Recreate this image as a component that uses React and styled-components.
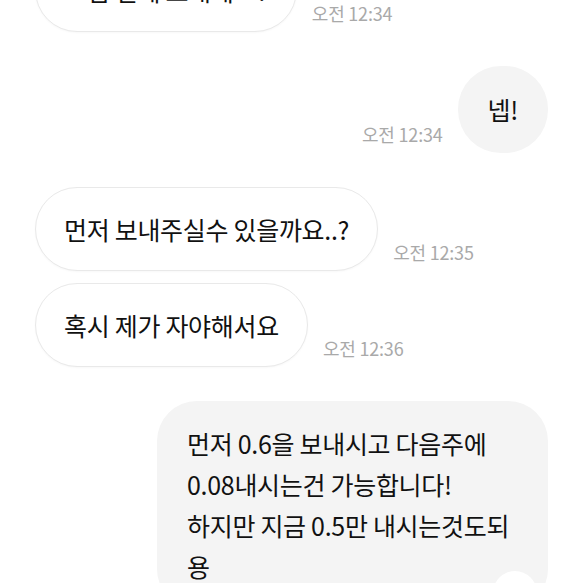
import React from 'react'
import styled, { createGlobalStyle, css } from 'styled-components'

const GlobalStyle = createGlobalStyle`
    html, body {
        margin: 0;
        padding: 0;
        background: #ffffff;
    }
    body {
        font-family: 'Noto Sans CJK KR', 'Noto Sans', sans-serif;
        -webkit-font-smoothing: antialiased;
    }
`

const Screen = styled.div`
    width: 583px;
    height: 583px;
    overflow: hidden;
    background: #ffffff;
`

// scrolled chat: first bubble sits partly above the viewport
const Thread = styled.div`
    display: flex;
    flex-direction: column;
    padding: 0 35px 0 35px;
    margin-top: -52px;
`

const Row = styled.div`
    display: flex;
    align-items: flex-end;
    gap: 15px;
    justify-content: ${(p) => (p.$mine ? 'flex-end' : 'flex-start')};
    margin-top: ${(p) => (p.$grouped ? '12px' : '34px')};
    &:first-child {
        margin-top: 0;
    }
`

const Bubble = styled.div`
    position: relative;
    box-sizing: border-box;
    border-radius: 43px;
    font-size: 25px;
    line-height: 41px;
    color: #111111;
    letter-spacing: -0.3px;
    max-width: 391px;
    white-space: pre-line;
    ${(p) =>
        p.$mine
            ? css`
                  padding: 23px 30px;
                  background: #f4f4f4;
              `
            : css`
                  padding: 20.5px 28px;
                  background: #ffffff;
                  border: 1.5px solid #e9e9e9;
                  box-shadow: 0 1px 2px rgba(0, 0, 0, 0.03);
              `}
    ${(p) =>
        p.$long &&
        css`
            width: 391px;
            padding: 22px 30px;
            border-radius: 40px;
        `}
`

const Time = styled.span`
    flex: none;
    margin-bottom: 8px;
    font-size: 18px;
    line-height: 22px;
    color: #a9a9a9;
    letter-spacing: -0.2px;
    white-space: nowrap;
`

const Reaction = styled.span`
    position: absolute;
    right: 11px;
    top: 170px;
    width: 44px;
    height: 44px;
    border-radius: 50%;
    background: #ffffff;
`

const messages = [
    { id: 1, mine: false, text: '그럼 언제 보내세요?', time: '오전 12:34' },
    { id: 2, mine: true, text: '넵!', time: '오전 12:34' },
    { id: 3, mine: false, text: '먼저 보내주실수 있을까요..?', time: '오전 12:35' },
    { id: 4, mine: false, text: '혹시 제가 자야해서요', time: '오전 12:36', grouped: true },
    {
        id: 5,
        mine: true,
        long: true,
        text: '먼저 0.6을 보내시고 다음주에 0.08내시는건 가능합니다!\n하지만 지금 0.5만 내시는것도되용',
    },
]

const Message = ({ msg }) => (
    <Row $mine={msg.mine} $grouped={msg.grouped}>
        {msg.mine && msg.time && <Time>{msg.time}</Time>}
        <Bubble $mine={msg.mine} $long={msg.long}>
            {msg.text}
            {msg.long && <Reaction />}
        </Bubble>
        {!msg.mine && msg.time && <Time>{msg.time}</Time>}
    </Row>
)

const App = () => (
    <Screen>
        <GlobalStyle />
        <Thread>
            {messages.map((m) => (
                <Message key={m.id} msg={m} />
            ))}
        </Thread>
    </Screen>
)

export default App
